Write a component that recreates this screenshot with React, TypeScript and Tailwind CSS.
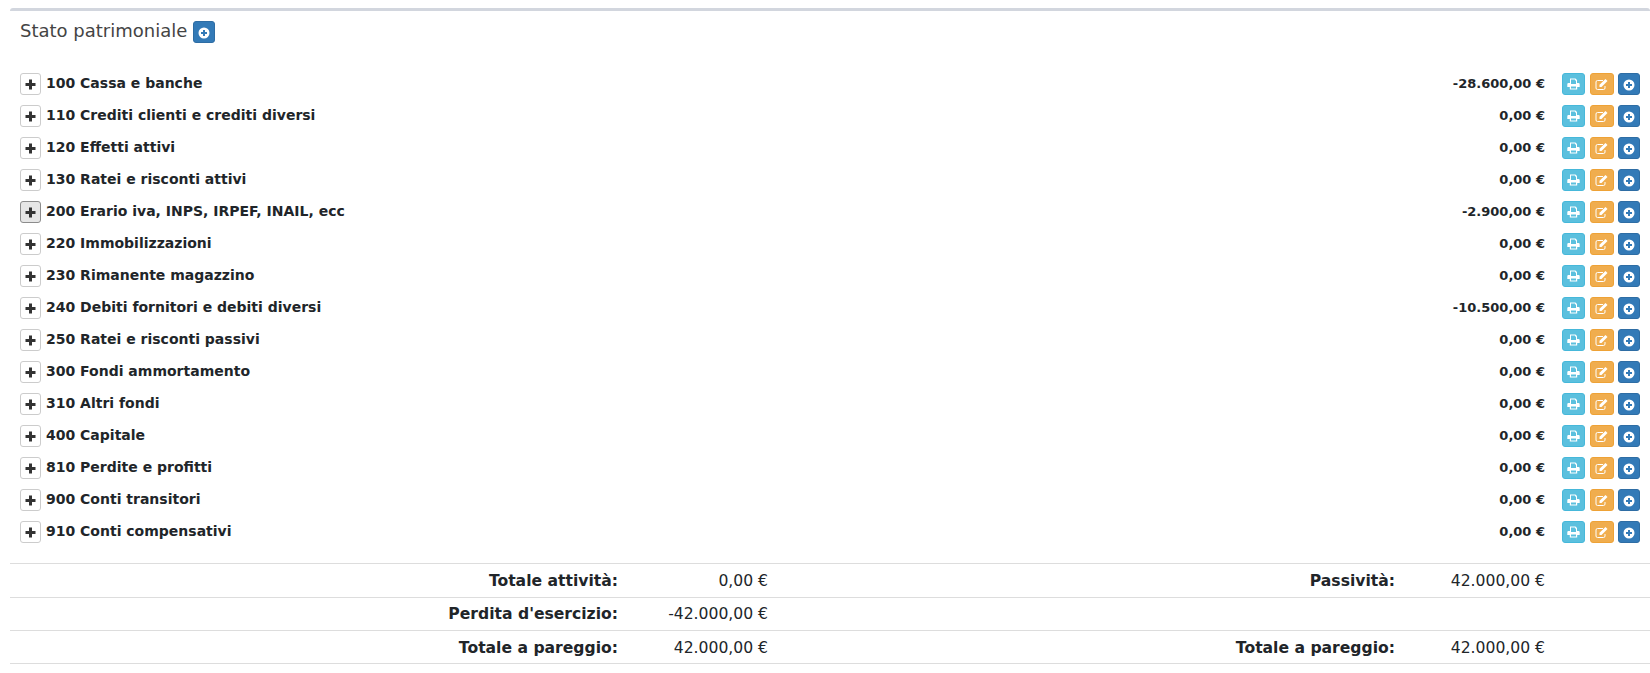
import { ReactNode } from "react";

const rows = [
  ["100 Cassa e banche", "-28.600,00 €"],
  ["110 Crediti clienti e crediti diversi", "0,00 €"],
  ["120 Effetti attivi", "0,00 €"],
  ["130 Ratei e risconti attivi", "0,00 €"],
  ["200 Erario iva, INPS, IRPEF, INAIL, ecc", "-2.900,00 €"],
  ["220 Immobilizzazioni", "0,00 €"],
  ["230 Rimanente magazzino", "0,00 €"],
  ["240 Debiti fornitori e debiti diversi", "-10.500,00 €"],
  ["250 Ratei e risconti passivi", "0,00 €"],
  ["300 Fondi ammortamento", "0,00 €"],
  ["310 Altri fondi", "0,00 €"],
  ["400 Capitale", "0,00 €"],
  ["810 Perdite e profitti", "0,00 €"],
  ["900 Conti transitori", "0,00 €"],
  ["910 Conti compensativi", "0,00 €"],
];

const totals = [
  ["Totale attività:", "0,00 €", "Passività:", "42.000,00 €"],
  ["Perdita d'esercizio:", "-42.000,00 €", "", ""],
  ["Totale a pareggio:", "42.000,00 €", "Totale a pareggio:", "42.000,00 €"],
];

const PlusCircle = () => (
  <svg width="12" height="12" viewBox="0 0 12 12" className="mt-[1px]">
    <path
      fill="#fff"
      fillRule="evenodd"
      d="M6 .5a5.500 5.500 0 1 1 0 11 5.500 5.500 0 0 1 0-11ZM5 3v2H3v2h2v2h2V7h2V5H7V3H5Z"
    />
  </svg>
);

const Printer = () => (
  <svg width="13" height="12" viewBox="0 0 13 12">
    <path
      fill="#fff"
      fillRule="evenodd"
      d="M3 .5h5.500L10 2v3h1.500A1.200 1.200 0 0 1 12.700 6.200V9h-2.500v2.500H2.800V9H.3V6.200A1.200 1.200 0 0 1 1.500 5H3V.5Zm1 1V6h5V2.500H8V1.500H4Zm0 7V10.500h5V8.500H4Z"
    />
  </svg>
);

const Edit = () => (
  <svg width="14" height="13" viewBox="0 0 14 13">
    <path
      fill="none"
      stroke="#fff"
      strokeWidth="1"
      d="M10 8v2a1.500 1.500 0 0 1-1.500 1.500H2.500A1.500 1.500 0 0 1 1 10V4a1.500 1.500 0 0 1 1.500-1.500H8"
    />
    <path fill="#fff" d="M4.500 6.800 10.500 1l2 2-6 6H4.500V6.800Z" />
  </svg>
);

const Action = ({ color, children }: { color: string; children: ReactNode }) => (
  <button className={`flex h-[22px] items-center justify-center rounded-[3px] border ${color}`}>{children}</button>
);

export default function App() {
  return (
    <div className="bg-white pt-2 pl-[10px] font-['DejaVu_Sans',sans-serif] text-[#212529]">
      <div className="rounded-t-[3px] border-t-[3px] border-[#d2d6de]">
        <div className="flex h-[36px] items-center gap-[6px] pl-[10px] pt-[6px]">
          <h3 className="pb-[3px] text-[18px] text-[#444]">Stato patrimoniale</h3>
          <Action color="w-[22px] border-[#2e6da4] bg-[#337ab7]">
            <PlusCircle />
          </Action>
        </div>

        <div className="mt-[20px] pr-[10px]">
          {rows.map(([name, amount], i) => (
            <div key={name} className="flex h-[32px] items-center pl-[10px]">
              <button
                className={`mt-[2px] flex h-[22px] w-[21px] items-center justify-center rounded-[3px] border ${i === 4 ? "border-[#8c8c8c] bg-[#e6e6e6]" : "border-[#ccc] bg-white"}`}
              >
                <svg width="11" height="11" viewBox="0 0 11 11">
                  <path fill="#333" d="M4 .5h3V4h3.500v3H7v3.500H4V7H.5V4H4V.5Z" />
                </svg>
              </button>
              <span className="ml-[5px] flex-1 text-[14px] font-bold">{name}</span>
              <span className="mt-[2px] text-[13px] font-bold">{amount}</span>
              <div className="ml-[17px] mt-[2px] flex gap-[4px]">
                <Action color="w-[23px] border-[#46b8da] bg-[#5bc0de]">
                  <Printer />
                </Action>
                <Action color="ml-[1px] w-[24px] border-[#eea236] bg-[#f0ad4e]">
                  <Edit />
                </Action>
                <Action color="w-[22px] border-[#2e6da4] bg-[#337ab7]">
                  <PlusCircle />
                </Action>
              </div>
            </div>
          ))}
        </div>

        <div className="mt-[16px] border-b border-[#ddd]">
          {totals.map(([a, b, c, d]) => (
            <div
              key={a}
              className="grid h-[33px] grid-cols-[608px_150px_627px_150px_1fr] items-center border-t border-[#ddd] pt-[2px] text-[15.6px] first:h-[34px] last:pt-[4px]"
            >
              <span className="text-right font-bold">{a}</span>
              <span className="text-right">{b}</span>
              <span className="text-right font-bold">{c}</span>
              <span className="text-right">{d}</span>
              <span />
            </div>
          ))}
        </div>
      </div>
    </div>
  );
}
